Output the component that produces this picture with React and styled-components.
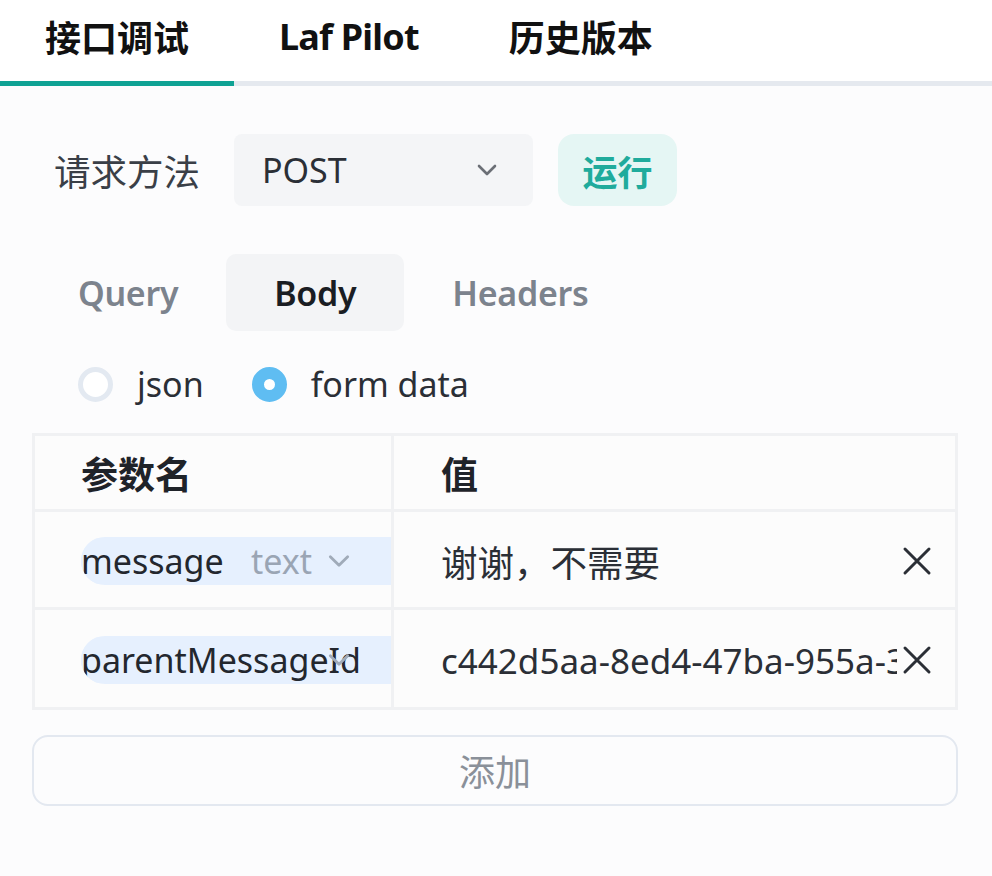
import React from "react";
import styled, { createGlobalStyle } from "styled-components";

const Global = createGlobalStyle`
  html, body { margin: 0; padding: 0; background: #fcfcfd; }
  body {
    font-family: "Segoe UI", "Noto Sans", "Noto Sans CJK SC", sans-serif;
    color: #2d3748;
  }
  * { box-sizing: border-box; }
`;

const Page = styled.div`
  width: 992px;
  height: 876px;
  background: #fcfcfd;
  overflow: hidden;
`;

const TabList = styled.div`
  display: flex;
  border-bottom: 5px solid #e5e9ef;
  background: #fff;
`;

const Tab = styled.div`
  height: 86px;
  padding: 0 45px 9px;
  margin-bottom: -5px;
  display: flex;
  align-items: center;
  font-size: 36px;
  font-weight: 700;
  color: #111;
  letter-spacing: ${(p) => (p.$latin ? "-0.8px" : "0")};
  border-bottom: 5px solid ${(p) => (p.$active ? "#0fa294" : "transparent")};
`;

const Content = styled.div`
  padding: 48px 34px 0 32px;
  display: flex;
  flex-direction: column;
`;

const MethodRow = styled.div`
  display: flex;
  align-items: center;
  height: 72px;
`;

const Label = styled.div`
  font-size: 36.5px;
  color: #3a3f47;
  margin-left: 22px;
  width: 180px;
`;

const Select = styled.div`
  width: 299px;
  height: 72px;
  background: #f4f5f7;
  border-radius: 8px;
  display: flex;
  align-items: center;
  justify-content: space-between;
  padding: 0 34px 0 28px;
  font-size: 34px;
  color: #2b2f36;
`;

const RunButton = styled.div`
  margin-left: 25px;
  width: 119px;
  height: 72px;
  border-radius: 16px;
  background: #e5f6f4;
  color: #20ab9c;
  font-size: 35px;
  font-weight: 700;
  display: flex;
  align-items: center;
  justify-content: center;
`;

const SubTabs = styled.div`
  display: flex;
  margin-top: 48px;
  margin-left: -2px;
`;

const SubTab = styled.div`
  height: 77px;
  padding: 0 48px;
  display: flex;
  align-items: center;
  border-radius: 10px;
  font-size: 34px;
  letter-spacing: -0.3px;
  font-weight: 600;
  color: ${(p) => (p.$active ? "#1a1d23" : "#7c838d")};
  background: ${(p) => (p.$active ? "#f3f4f6" : "transparent")};
`;

const RadioRow = styled.div`
  display: flex;
  align-items: center;
  height: 50px;
  margin-top: 28px;
  padding-left: 46px;
`;

const RadioItem = styled.div`
  display: flex;
  align-items: center;
  margin-right: 48px;
  font-size: 34px;
  color: #2b2f36;
`;

const RadioCircle = styled.span`
  width: 35px;
  height: 35px;
  border-radius: 50%;
  margin-right: 24px;
  border: ${(p) => (p.$checked ? "12px solid #5fbdf2" : "5px solid #e3e9f1")};
  background: #fff;
`;

const Table = styled.div`
  margin-top: 24px;
  border: 3px solid #f0f1f3;
  display: grid;
  grid-template-columns: 356px 1fr;
  background: #fcfcfc;
`;

const Cell = styled.div`
  height: ${(p) => p.$h}px;
  display: flex;
  align-items: center;
  padding-left: ${(p) => (p.$first ? 46 : 47)}px;
  padding-right: ${(p) => (p.$first ? 0 : 18)}px;
  padding-top: ${(p) => (p.$head ? 0 : 3)}px;
  border-top: ${(p) => (p.$head ? "none" : "3px solid #f0f1f3")};
  border-left: ${(p) => (p.$first ? "none" : "3px solid #f0f1f3")};
  font-size: 35px;
  color: #2b2f36;
  overflow: hidden;
  min-width: 0;
`;

const HeadText = styled.span`
  font-size: 37px;
  font-weight: 700;
  color: #1f2329;
`;

const NamePill = styled.div`
  flex: 1;
  height: 48px;
  border-radius: 24px 0 0 24px;
  background: #e6f0fe;
  display: flex;
  align-items: center;
  position: relative;
  overflow: hidden;
  white-space: nowrap;
`;

const NameText = styled.span`
  font-size: 34px;
  color: #23272e;
  position: relative;
  z-index: 1;
  background: #e6f0fe;
`;

const TypeSelect = styled.span`
  position: absolute;
  left: 170px;
  display: flex;
  align-items: center;
  gap: 14px;
  font-size: 34px;
  color: #9aa5b4;
  z-index: ${(p) => (p.$over ? 2 : 0)};
`;

const TypeLabel = styled.span`
  visibility: ${(p) => (p.$hidden ? "hidden" : "visible")};
`;

const ValueText = styled.span`
  flex: 1;
  white-space: nowrap;
  overflow: hidden;
  font-size: ${(p) => (p.$cjk ? 36.5 : 35)}px;
  color: #2b2f36;
`;

const CloseBtn = styled.span`
  display: flex;
  align-items: center;
  justify-content: center;
  width: 40px;
  flex-shrink: 0;
`;

const AddButton = styled.div`
  margin-top: 25px;
  height: 71px;
  border: 2px solid #e3e8f0;
  border-radius: 16px;
  display: flex;
  align-items: center;
  justify-content: center;
  font-size: 36px;
  color: #8a9099;
`;

const Chevron = ({ color = "#6b6f76", size = 24 }) => (
  <svg width={size} height={size} viewBox="0 0 24 24" fill="none">
    <path d="M4 8l8 8 8-8" stroke={color} strokeWidth="2.6" strokeLinecap="round" strokeLinejoin="round" />
  </svg>
);

const XIcon = () => (
  <svg width="30" height="30" viewBox="0 0 30 30" fill="none">
    <path d="M3 3l24 24M27 3L3 27" stroke="#2b2f36" strokeWidth="3" strokeLinecap="round" />
  </svg>
);

export default function App() {
  return (
    <Page>
      <Global />
      <TabList>
        <Tab $active>接口调试</Tab>
        <Tab $latin>Laf Pilot</Tab>
        <Tab>历史版本</Tab>
      </TabList>
      <Content>
        <MethodRow>
          <Label>请求方法</Label>
          <Select>
            <span>POST</span>
            <Chevron />
          </Select>
          <RunButton>运行</RunButton>
        </MethodRow>
        <SubTabs>
          <SubTab>Query</SubTab>
          <SubTab $active>Body</SubTab>
          <SubTab>Headers</SubTab>
        </SubTabs>
        <RadioRow>
          <RadioItem>
            <RadioCircle />
            json
          </RadioItem>
          <RadioItem>
            <RadioCircle $checked />
            form data
          </RadioItem>
        </RadioRow>
        <Table>
          <Cell $head $first $h={73}>
            <HeadText>参数名</HeadText>
          </Cell>
          <Cell $head $h={73}>
            <HeadText>值</HeadText>
          </Cell>
          <Cell $first $h={98}>
            <NamePill>
              <NameText>message</NameText>
              <TypeSelect>
                <TypeLabel>text</TypeLabel>
                <Chevron color="#a0abb9" size={26} />
              </TypeSelect>
            </NamePill>
          </Cell>
          <Cell $h={98}>
            <ValueText $cjk>谢谢，不需要</ValueText>
            <CloseBtn>
              <XIcon />
            </CloseBtn>
          </Cell>
          <Cell $first $h={100}>
            <NamePill>
              <NameText>parentMessageId</NameText>
              <TypeSelect $over>
                <TypeLabel $hidden>text</TypeLabel>
                <Chevron color="#a0abb9" size={26} />
              </TypeSelect>
            </NamePill>
          </Cell>
          <Cell $h={100}>
            <ValueText>c442d5aa-8ed4-47ba-955a-3b7f1e2c9d10</ValueText>
            <CloseBtn>
              <XIcon />
            </CloseBtn>
          </Cell>
        </Table>
        <AddButton>添加</AddButton>
      </Content>
    </Page>
  );
}
